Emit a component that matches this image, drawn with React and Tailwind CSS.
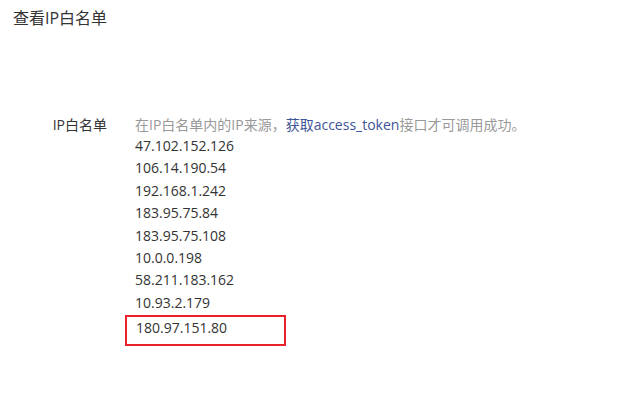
export default function App() {
  const ips = [
    "47.102.152.126",
    "106.14.190.54",
    "192.168.1.242",
    "183.95.75.84",
    "183.95.75.108",
    "10.0.0.198",
    "58.211.183.162",
    "10.93.2.179",
  ];
  return (
    <div
      className="w-[631px] h-[403px] bg-white text-[#333333] overflow-hidden font-['Open_Sans','Noto_Sans_CJK_SC',sans-serif]"
    >
      <div className="pl-[13px] pt-[8px] text-[16px] leading-[20px]">查看IP白名单</div>
      <div className="mt-[86px] flex">
        <div className="w-[107px] text-right text-[14px] leading-[22px]">IP白名单</div>
        <div className="ml-[28px] flex flex-col">
          <div className="text-[14px] leading-[21px] text-[#999999]">
            在IP白名单内的IP来源，<span className="text-[#3e5597]">获取access_token</span>接口才可调用成功。
          </div>
          {ips.map((ip) => (
            <div key={ip} className="text-[14px] leading-[22.4px]">
              {ip}
            </div>
          ))}
          <div className="-ml-[10px] mt-[1px] w-[161px] h-[31px] border-2 border-[#e8212b] pl-[9px] text-[14px] leading-[22px]">
            180.97.151.80
          </div>
        </div>
      </div>
    </div>
  );
}
